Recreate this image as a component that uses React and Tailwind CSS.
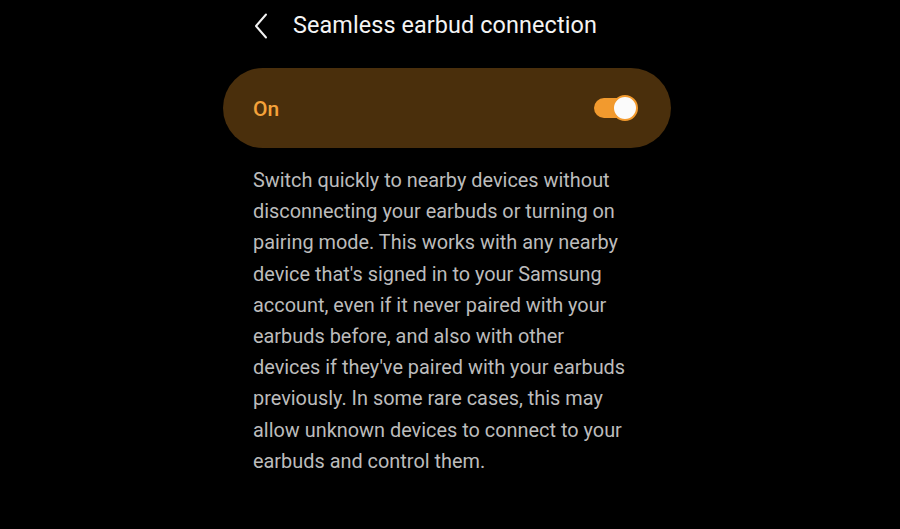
import { ChevronLeft } from 'lucide-react'

export default function App() {
  return (
    <div className="w-[900px] h-[529px] bg-black overflow-hidden font-['Roboto',sans-serif]">
      <div className="ml-[223px] w-[448px]">
        {/* Header */}
        <div className="flex items-center h-[51px] pl-[30px]">
          <svg width="16" height="26" viewBox="0 0 16 26" className="text-[#f2f2f2]">
            <path d="M13 1.5 L3 13 L13 24.5" fill="none" stroke="currentColor" strokeWidth="2" strokeLinecap="round" strokeLinejoin="round" />
          </svg>
          <h1 className="ml-[24px] text-[23.4px] text-[#f4f4f4] tracking-[0.1px]">Seamless earbud connection</h1>
        </div>

        {/* Toggle card */}
        <div className="mt-[17px] h-[80px] rounded-[40px] bg-[#4a2f0c] flex items-center justify-between pl-[30px] pr-[33px]">
          <span className="pt-[3px] text-[21px] font-medium text-[#f5a23a]">On</span>
          <div className="relative w-[44px] h-[26px] flex items-center">
            <div className="w-[40px] h-[20px] rounded-full bg-[#f29a2e]" />
            <div className="absolute right-0 top-0 w-[26px] h-[26px] rounded-full bg-[#fbfbfb] border-[2px] border-[#f29a2e]" />
          </div>
        </div>

        {/* Description */}
        <p className="mt-[17px] pl-[30px] pr-[43px] text-[19.9px] leading-[31.2px] text-[#bcbcbc]">
          Switch quickly to nearby devices without disconnecting your earbuds or turning on pairing mode. This works with any nearby device that's signed in to your Samsung account, even if it never paired with your earbuds before, and also with other devices if they've paired with your earbuds previously. In some rare cases, this may allow unknown devices to connect to your earbuds and control them.
        </p>
      </div>
    </div>
  )
}
